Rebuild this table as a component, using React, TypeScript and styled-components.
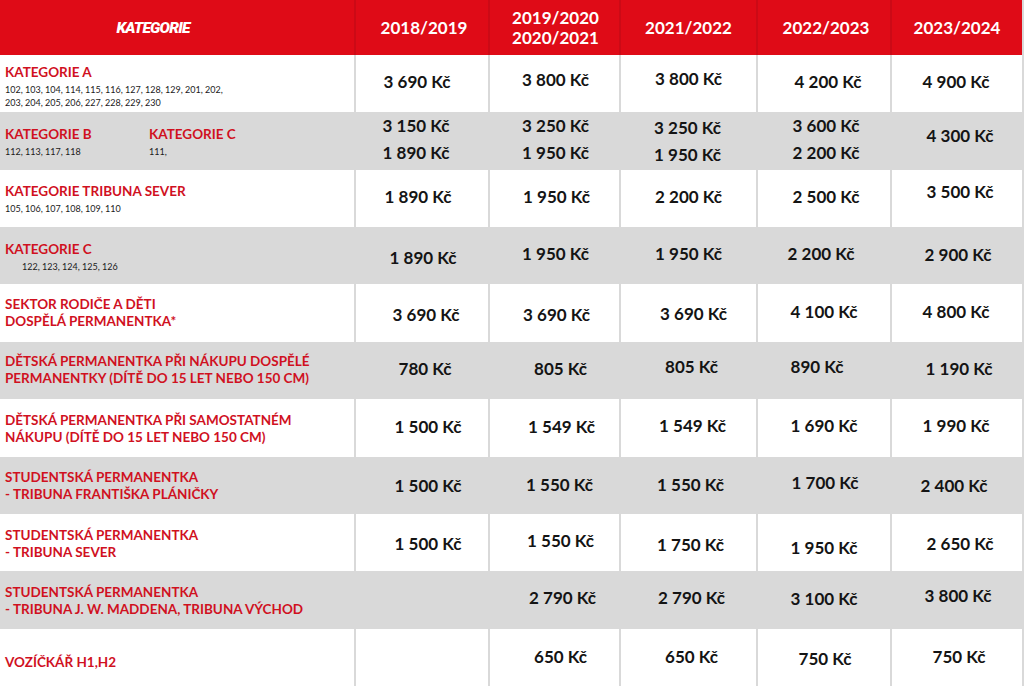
import React from 'react';
import styled, { createGlobalStyle } from 'styled-components';

const Global = createGlobalStyle`
  html, body { margin: 0; padding: 0; background: #ffffff; }
  body {
    width: 1024px;
    height: 686px;
    overflow: hidden;
    font-family: Lato, "Liberation Sans", sans-serif;
  }
`;

const RED = '#df0b17';
const LABEL_RED = '#d0111f';
const GRAY = '#d9d9d9';

const Table = styled.div`
  width: 1024px;
  height: 686px;
  box-sizing: border-box;
  padding-right: 2px;
  display: grid;
  grid-template-rows: 55px repeat(11, 1fr);
  background: ${GRAY};
`;

const Row = styled.div<{ $kind: 'head' | 'white' | 'gray' }>`
  display: grid;
  grid-template-columns: 354px 132px 129px 135px 132px 130px;
  column-gap: 2px;
  background: ${(p) => (p.$kind === 'head' ? '#cc0a16' : GRAY)};
  --cell-bg: ${(p) => (p.$kind === 'head' ? RED : p.$kind === 'white' ? '#ffffff' : GRAY)};
`;

const Cell = styled.div`
  background: var(--cell-bg);
  display: flex;
  align-items: center;
  justify-content: center;
  min-width: 0;
  overflow: hidden;
`;

const LabelCell = styled(Cell)`
  justify-content: flex-start;
  padding-left: 5px;
`;

const HeadTitle = styled.div`
  font-family: Roboto, "DejaVu Sans", sans-serif;
  font-weight: 900;
  font-style: italic;
  font-size: 15.5px;
  letter-spacing: -0.8px;
  color: #ffffff;
  margin-right: 48px;
  margin-top: 1px;
`;

const HeadYear = styled.div<{ $dx?: number }>`
  font-family: Lato, "Liberation Sans", sans-serif;
  font-weight: 700;
  font-size: 17px;
  line-height: 20px;
  color: #ffffff;
  text-align: center;
  transform: translateX(${(p) => p.$dx ?? 0}px);
`;

const LabelBlock = styled.div<{ $dy?: number }>`
  display: flex;
  flex-direction: column;
  transform: translateY(${(p) => p.$dy ?? 0}px);
`;

const LabelPair = styled.div`
  display: flex;
  align-items: flex-start;
`;

const LabelPart = styled.div<{ $w?: number }>`
  display: flex;
  flex-direction: column;
  width: ${(p) => (p.$w ? `${p.$w}px` : 'auto')};
`;

const Title = styled.div`
  font-family: Lato, "Liberation Sans", sans-serif;
  font-weight: 700;
  font-size: 13.5px;
  line-height: 17px;
  color: ${LABEL_RED};
  white-space: nowrap;
`;

const Sections = styled.div<{ $indent?: number }>`
  font-family: Lato, "Liberation Sans", sans-serif;
  font-weight: 400;
  font-size: 9px;
  line-height: 13px;
  color: #1a1a1a;
  margin-top: 2px;
  padding-left: ${(p) => p.$indent ?? 0}px;
  white-space: nowrap;
`;

const Price = styled.div<{ $dx: number; $dy: number; $gap?: number }>`
  display: flex;
  flex-direction: column;
  align-items: center;
  gap: ${(p) => p.$gap ?? 0}px;
  font-family: Lato, "Liberation Sans", sans-serif;
  font-weight: 700;
  font-size: 17px;
  line-height: 20px;
  color: #141414;
  white-space: nowrap;
  transform: translate(${(p) => p.$dx}px, ${(p) => p.$dy}px);
`;

type PriceData = { v: string[]; dx: number; dy: number } | null;

type Label =
  | { kind: 'simple'; title: string[]; sections?: string[]; indent?: number; dy?: number }
  | { kind: 'pair' };

type RowData = { label: Label; prices: PriceData[] };

const p = (v: string | string[], dx: number, dy: number): PriceData => ({
  v: Array.isArray(v) ? v : [v],
  dx,
  dy,
});

const rows: RowData[] = [
  {
    label: {
      kind: 'simple',
      title: ['KATEGORIE A'],
      sections: ['102, 103, 104, 114, 115, 116, 127, 128, 129, 201, 202,', '203, 204, 205, 206, 227, 228, 229, 230'],
      dy: 3,
    },
    prices: [
      p('3 690 Kč', -5, -2),
      p('3 800 Kč', 1, -4),
      p('3 800 Kč', 0, -5),
      p('4 200 Kč', 4, -2),
      p('4 900 Kč', -1, -2),
    ],
  },
  {
    label: { kind: 'pair' },
    prices: [
      p(['3 150 Kč', '1 890 Kč'], -6, -2),
      p(['3 250 Kč', '1 950 Kč'], 1, -2),
      p(['3 250 Kč', '1 950 Kč'], -1, 0),
      p(['3 600 Kč', '2 200 Kč'], 2, -2),
      p('4 300 Kč', 3, -5),
    ],
  },
  {
    label: { kind: 'simple', title: ['KATEGORIE TRIBUNA SEVER'], sections: ['105, 106, 107, 108, 109, 110'], dy: 1 },
    prices: [p('1 890 Kč', -4, -1), p('1 950 Kč', 2, -1), p('2 200 Kč', 0, -1), p('2 500 Kč', 2, -1), p('3 500 Kč', 3, -6)],
  },
  {
    label: { kind: 'simple', title: ['KATEGORIE C'], sections: ['122, 123, 124, 125, 126'], indent: 17, dy: 1 },
    prices: [p('1 890 Kč', 1, 2), p('1 950 Kč', 1, -2), p('1 950 Kč', 0, -2), p('2 200 Kč', -3, -2), p('2 900 Kč', 1, -1)],
  },
  {
    label: { kind: 'simple', title: ['SEKTOR RODIČE A DĚTI', 'DOSPĚLÁ PERMANENTKA*'], dy: 0 },
    prices: [p('3 690 Kč', 4, 2), p('3 690 Kč', 2, 2), p('3 690 Kč', 5, 1), p('4 100 Kč', 0, -1), p('4 800 Kč', -1, -1)],
  },
  {
    label: {
      kind: 'simple',
      title: ['DĚTSKÁ PERMANENTKA PŘI NÁKUPU DOSPĚLÉ', 'PERMANENTKY (DÍTĚ DO 15 LET NEBO 150 CM)'],
      dy: 0,
    },
    prices: [p('780 Kč', 3, -1), p('805 Kč', 6, -1), p('805 Kč', 3, -3), p('890 Kč', -7, -3), p('1 190 Kč', 2, -1)],
  },
  {
    label: {
      kind: 'simple',
      title: ['DĚTSKÁ PERMANENTKA PŘI SAMOSTATNÉM', 'NÁKUPU (DÍTĚ DO 15 LET NEBO 150 CM)'],
      dy: 1,
    },
    prices: [p('1 500 Kč', 6, -1), p('1 549 Kč', 7, -1), p('1 549 Kč', 4, -2), p('1 690 Kč', 0, -2), p('1 990 Kč', -1, -2)],
  },
  {
    label: { kind: 'simple', title: ['STUDENTSKÁ PERMANENTKA', '- TRIBUNA FRANTIŠKA PLÁNIČKY'], dy: 1 },
    prices: [p('1 500 Kč', 6, 1), p('1 550 Kč', 5, 0), p('1 550 Kč', 2, 0), p('1 700 Kč', 1, -2), p('2 400 Kč', -3, 1)],
  },
  {
    label: { kind: 'simple', title: ['STUDENTSKÁ PERMANENTKA', '- TRIBUNA SEVER'], dy: 1 },
    prices: [p('1 500 Kč', 6, 1), p('1 550 Kč', 6, -2), p('1 750 Kč', 2, 2), p('1 950 Kč', 0, 5), p('2 650 Kč', 3, 1)],
  },
  {
    label: { kind: 'simple', title: ['STUDENTSKÁ PERMANENTKA', '- TRIBUNA J. W. MADDENA, TRIBUNA VÝCHOD'], dy: 1 },
    prices: [null, p('2 790 Kč', 8, -2), p('2 790 Kč', 3, -2), p('3 100 Kč', 0, -1), p('3 800 Kč', 1, -4)],
  },
  {
    label: { kind: 'simple', title: ['VOZÍČKÁŘ H1,H2'], dy: 5 },
    prices: [null, p('650 Kč', 6, 0), p('650 Kč', 3, 0), p('750 Kč', 1, 2), p('750 Kč', 2, 0)],
  },
];

const years: { lines: string[]; dx: number }[] = [
  { lines: ['2018/2019'], dx: 2 },
  { lines: ['2019/2020', '2020/2021'], dx: 1 },
  { lines: ['2021/2022'], dx: 0 },
  { lines: ['2022/2023'], dx: 2 },
  { lines: ['2023/2024'], dx: 0 },
];

function LabelContent({ label }: { label: Label }) {
  if (label.kind === 'pair') {
    return (
      <LabelBlock $dy={1}>
        <LabelPair>
          <LabelPart $w={144}>
            <Title>KATEGORIE B</Title>
            <Sections>112, 113, 117, 118</Sections>
          </LabelPart>
          <LabelPart>
            <Title>KATEGORIE C</Title>
            <Sections>111,</Sections>
          </LabelPart>
        </LabelPair>
      </LabelBlock>
    );
  }
  return (
    <LabelBlock $dy={label.dy}>
      {label.title.map((t) => (
        <Title key={t}>{t}</Title>
      ))}
      {label.sections && (
        <Sections $indent={label.indent}>
          {label.sections.map((s) => (
            <div key={s}>{s}</div>
          ))}
        </Sections>
      )}
    </LabelBlock>
  );
}

export default function App() {
  return (
    <>
      <Global />
      <Table>
        <Row $kind="head">
          <Cell>
            <HeadTitle>KATEGORIE</HeadTitle>
          </Cell>
          {years.map((y) => (
            <Cell key={y.lines[0]}>
              <HeadYear $dx={y.dx}>
                {y.lines.map((l) => (
                  <div key={l}>{l}</div>
                ))}
              </HeadYear>
            </Cell>
          ))}
        </Row>
        {rows.map((r, i) => (
          <Row key={i} $kind={i % 2 === 0 ? 'white' : 'gray'}>
            <LabelCell>
              <LabelContent label={r.label} />
            </LabelCell>
            {r.prices.map((pr, j) => (
              <Cell key={j}>
                {pr && (
                  <Price $dx={pr.dx} $dy={pr.dy} $gap={pr.v.length > 1 ? 7 : 0}>
                    {pr.v.map((line) => (
                      <div key={line}>{line}</div>
                    ))}
                  </Price>
                )}
              </Cell>
            ))}
          </Row>
        ))}
      </Table>
    </>
  );
}
